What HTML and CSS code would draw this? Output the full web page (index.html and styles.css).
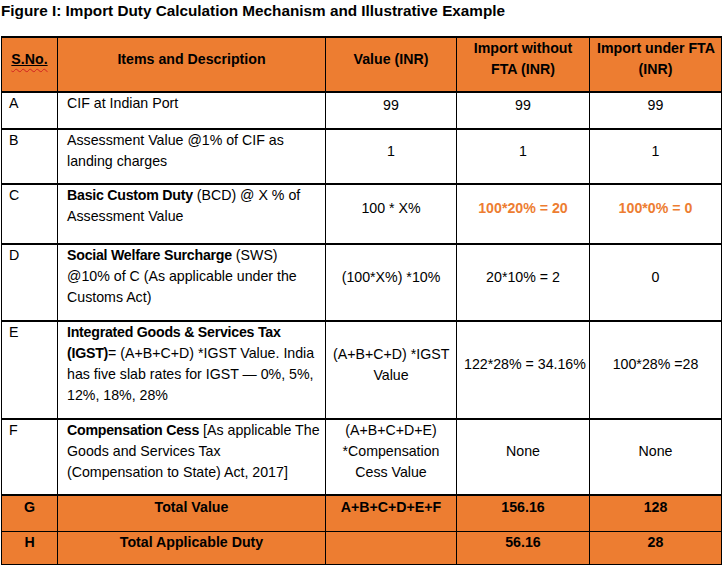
FILE: index.html
```html
<!DOCTYPE html>
<html lang="en">
<head>
<meta charset="utf-8">
<title>Import Duty Calculation</title>
<link rel="stylesheet" href="styles.css">
</head>
<body>
<div class="page">
  <div class="title">Figure I: Import Duty Calculation Mechanism and Illustrative Example</div>
  <table class="duty">
    <colgroup>
      <col class="c-sn">
      <col class="c-item">
      <col class="c-val">
      <col class="c-wo">
      <col class="c-fta">
    </colgroup>
    <tr class="hd r-head">
      <th><span class="spell"><span class="ul">S.No.</span></span></th>
      <th>Items and Description</th>
      <th>Value (INR)</th>
      <th>Import without<br>FTA (INR)</th>
      <th>Import under FTA<br>(INR)</th>
    </tr>
    <tr class="r-a">
      <td class="sn">A</td>
      <td class="item">CIF at Indian Port</td>
      <td class="num">99</td>
      <td class="num">99</td>
      <td class="num">99</td>
    </tr>
    <tr class="r-b">
      <td class="sn">B</td>
      <td class="item">Assessment Value @1% of CIF as<br>landing charges</td>
      <td class="num">1</td>
      <td class="num">1</td>
      <td class="num">1</td>
    </tr>
    <tr class="r-c">
      <td class="sn">C</td>
      <td class="item"><b>Basic Custom Duty</b> (BCD) @ X % of<br>Assessment Value</td>
      <td class="num">100 * X%</td>
      <td class="num hl">100*20% = 20</td>
      <td class="num hl">100*0% = 0</td>
    </tr>
    <tr class="r-d">
      <td class="sn">D</td>
      <td class="item"><b>Social Welfare Surcharge</b> (SWS)<br>@10% of C (As applicable under the<br>Customs Act)</td>
      <td class="num">(100*X%) *10%</td>
      <td class="num">20*10% = 2</td>
      <td class="num">0</td>
    </tr>
    <tr class="r-e">
      <td class="sn">E</td>
      <td class="item"><b>Integrated Goods &amp; Services Tax</b><br><b>(IGST)</b>= (A+B+C+D) *IGST Value. India<br>has five slab rates for IGST — 0%, 5%,<br>12%, 18%, 28%</td>
      <td class="num">(A+B+C+D) *IGST<br>Value</td>
      <td class="num">122*28% = 34.16%</td>
      <td class="num">100*28% =28</td>
    </tr>
    <tr class="r-f">
      <td class="sn">F</td>
      <td class="item"><b>Compensation Cess</b> [As applicable The<br>Goods and Services Tax<br>(Compensation to State) Act, 2017]</td>
      <td class="num">(A+B+C+D+E)<br>*Compensation<br>Cess Value</td>
      <td class="num">None</td>
      <td class="num">None</td>
    </tr>
    <tr class="tot r-g">
      <td>G</td>
      <td>Total Value</td>
      <td>A+B+C+D+E+F</td>
      <td>156.16</td>
      <td>128</td>
    </tr>
    <tr class="tot r-h">
      <td>H</td>
      <td>Total Applicable Duty</td>
      <td></td>
      <td>56.16</td>
      <td>28</td>
    </tr>
  </table>
</div>
</body>
</html>
```

FILE: styles.css
```css
html, body {
  margin: 0;
  padding: 0;
  background: #ffffff;
}

body {
  font-family: "Liberation Sans", Arial, sans-serif;
  font-size: 14.2px;
  color: #000000;
}

.page {
  width: 725px;
  height: 567px;
  overflow: hidden;
}

.title {
  font-weight: bold;
  font-size: 15.3px;
  line-height: 22px;
  padding-left: 1px;
  margin-bottom: 14px;
  white-space: nowrap;
}

.duty {
  border-collapse: collapse;
  table-layout: fixed;
  width: 720px;
  margin-left: 1px;
  line-height: 21px;
}

.c-sn { width: 56px; }
.c-item { width: 268px; }
.c-val { width: 131px; }
.c-wo { width: 133px; }
.c-fta { width: 132px; }

.duty th,
.duty td {
  border-left: 1px solid #000000;
  border-right: 1px solid #000000;
  border-top: 2px solid #000000;
  border-bottom: 2px solid #000000;
  padding: 0 7px 11px;
  white-space: nowrap;
  overflow: visible;
}

.duty th {
  background: #ed7d31;
  font-weight: bold;
  text-align: center;
  vertical-align: middle;
}

.spell {
  text-decoration: underline wavy #d02020;
  text-decoration-thickness: 1px;
  text-underline-offset: 4px;
}

.ul {
  text-decoration: underline solid #000000;
  text-decoration-thickness: 1px;
  text-underline-offset: 1px;
}

.duty td.sn {
  vertical-align: top;
  text-align: left;
}

.duty td.item {
  vertical-align: top;
  text-align: left;
  padding-left: 9px;
}

.duty td.item b {
  letter-spacing: -0.25px;
}

.duty td.num {
  text-align: center;
  vertical-align: middle;
}

.duty td.hl {
  color: #ed7d31;
  font-weight: bold;
}

.tot td {
  background: #ed7d31;
  font-weight: bold;
  text-align: center;
  vertical-align: middle;
  border-top-width: 1px;
  border-bottom-width: 1px;
}

.r-g td { border-top-width: 2px; }

.r-head { height: 55px; }
.r-a { height: 37px; }
.r-b { height: 54px; }
.r-c { height: 60px; }
.r-d { height: 77px; }
.r-e { height: 98px; }
.r-f { height: 76px; }
.r-g { height: 36px; }
.r-h { height: 33px; }
```
